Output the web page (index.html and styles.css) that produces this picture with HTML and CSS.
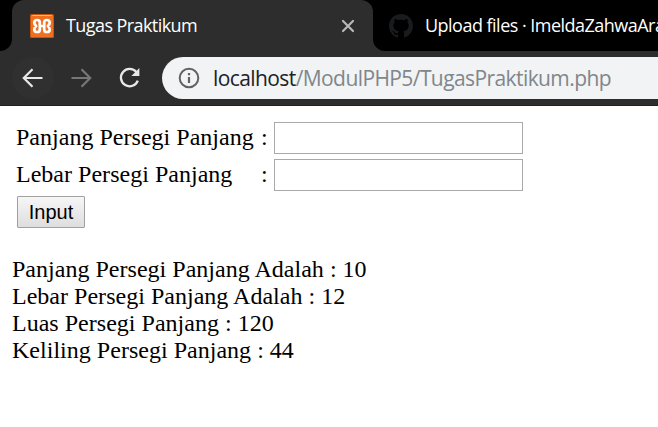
FILE: index.html
```html
<!DOCTYPE html>
<html lang="id">
<head>
<meta charset="utf-8">
<title>Tugas Praktikum</title>
<link rel="stylesheet" href="styles.css">
</head>
<body>
<header class="browser">
  <div class="tabs">
    <div class="strip-left"></div>
    <div class="tab-wrap">
      <div class="tab">
        <svg class="favicon" viewBox="0 0 24 24">
          <rect width="24" height="24" rx="1.5" fill="#c9530f"/>
          <rect x="1" y="1" width="22" height="22" rx="1" fill="#f07020"/>
          <path d="M2.5 1.5h19" stroke="#ffb88a"/>
          <path d="M9.8 12V8.6C9.8 6.8 8.9 6 7.4 6C5.5 6 4.3 7 4.3 8.8C4.3 10.2 5 11 6.1 12C5 13 4.3 14 4.3 15.4C4.3 17 5.5 18 7.4 18C8.9 18 9.8 17.2 9.8 15.4V12H14.2V15.4C14.2 17.2 15.1 18 16.6 18C18.5 18 19.7 17 19.7 15.4C19.7 14 19 13 17.9 12C19 11 19.7 10.2 19.7 8.8C19.7 7 18.5 6 16.6 6C15.1 6 14.2 6.8 14.2 8.6V12" fill="none" stroke="#fff" stroke-width="2.7" stroke-linejoin="round"/>
        </svg>
        <span class="tab-title">Tugas Praktikum</span>
        <svg class="close" viewBox="0 0 14 14"><path d="M2 2L12 12M12 2L2 12" stroke="#b8b8b8" stroke-width="2.2" stroke-linecap="round"/></svg>
      </div>
    </div>
    <div class="strip-right">
      <svg class="github" viewBox="0 0 16 16"><path fill="#191b1d" d="M8 0C3.58 0 0 3.58 0 8c0 3.54 2.29 6.53 5.47 7.59.4.07.55-.17.55-.38 0-.19-.01-.82-.01-1.49-2.01.37-2.53-.49-2.69-.94-.09-.23-.48-.94-.82-1.13-.28-.15-.68-.52-.01-.53.63-.01 1.08.58 1.23.82.72 1.21 1.87.87 2.33.66.07-.52.28-.87.51-1.07-1.78-.2-3.64-.89-3.64-3.95 0-.87.31-1.59.82-2.15-.08-.2-.36-1.02.08-2.12 0 0 .67-.21 2.2.82.64-.18 1.32-.27 2-.27s1.36.09 2 .27c1.53-1.04 2.2-.82 2.2-.82.44 1.1.16 1.92.08 2.12.51.56.82 1.27.82 2.15 0 3.07-1.87 3.75-3.65 3.95.29.25.54.73.54 1.48 0 1.07-.01 1.93-.01 2.2 0 .21.15.46.55.38A8.01 8.01 0 0 0 16 8c0-4.42-3.58-8-8-8z"/></svg>
      <span class="tab-title next-title">Upload files · ImeldaZahwaAra</span>
    </div>
  </div>
  <div class="toolbar">
    <div class="back">
      <svg class="nav-icon" viewBox="0 0 22 22"><path d="M20.5 11H2M10.5 2.2L1.8 11L10.5 19.8" fill="none" stroke="#e8e8e8" stroke-width="2.2"/></svg>
    </div>
    <svg class="nav-icon forward" viewBox="0 0 22 22"><path d="M1.5 11H20M11.5 2.2L20.2 11L11.5 19.8" fill="none" stroke="#777" stroke-width="2.2"/></svg>
    <svg class="nav-icon reload" viewBox="0 0 22 22"><path d="M17.4 5.1A8.7 8.7 0 1 0 18.8 13.6" fill="none" stroke="#e8e8e8" stroke-width="2.3"/><path d="M20.4 1V9H12.4Z" fill="#e8e8e8"/></svg>
    <div class="address">
      <svg class="info" viewBox="0 0 22 22"><circle cx="11" cy="11" r="9.3" fill="none" stroke="#5f6368" stroke-width="2"/><path d="M11 10v6M11 6v2.2" stroke="#5f6368" stroke-width="2.2"/></svg>
      <span class="url"><span class="host">localhost</span><span class="path">/ModulPHP5/TugasPraktikum.php</span></span>
    </div>
  </div>
</header>
<main class="page">
  <form class="form">
    <label for="panjang">Panjang Persegi Panjang</label><span>:</span><input id="panjang" class="field" type="text">
    <label for="lebar">Lebar Persegi Panjang</label><span>:</span><input id="lebar" class="field" type="text">
    <button class="submit" type="button">Input</button>
  </form>
  <div class="results">
    <div>Panjang Persegi Panjang Adalah : 10</div>
    <div>Lebar Persegi Panjang Adalah : 12</div>
    <div>Luas Persegi Panjang : 120</div>
    <div>Keliling Persegi Panjang : 44</div>
  </div>
</main>
</body>
</html>
```
FILE: styles.css
```css
* { box-sizing: border-box; }
body { margin: 0; height: 427px; overflow: hidden; background: #fff; color: #000; font: 24px/27px "Liberation Serif", serif; letter-spacing: 0.02px; }
svg { display: block; flex: none; }
.browser { height: 106px; background: #2d2d2d; border-bottom: 1px solid #211f20; font-family: "Open Sans", "Noto Sans", sans-serif; overflow: hidden; }
.tabs { display: flex; height: 51px; }
.strip-left { width: 12px; background: #000; border-bottom-right-radius: 12px; }
.tab-wrap { width: 361px; background: linear-gradient(#000 0 20px, #2d2d2d 20px); }
.tab { display: flex; align-items: center; height: 51px; padding: 0 18px; background: #2d2d2d; border-radius: 12px 12px 0 0; }
.favicon { width: 24px; height: 24px; margin-right: 12px; }
.tab-title { padding-bottom: 2px; color: #fff; font-size: 18px; line-height: 24px; letter-spacing: -0.58px; white-space: nowrap; }
.next-title { letter-spacing: -0.52px; }
.close { width: 14px; height: 14px; margin-left: auto; }
.strip-right { display: flex; align-items: center; flex: 1; min-width: 0; padding-left: 16px; background: #000; border-bottom-left-radius: 12px; overflow: hidden; }
.github { width: 24px; height: 24px; margin-right: 12px; }
.toolbar { display: flex; align-items: center; height: 54px; padding-left: 12px; }
.back { display: flex; align-items: center; justify-content: center; width: 42px; height: 42px; border-radius: 50%; background: #303030; }
.nav-icon { width: 22px; height: 22px; }
.forward { margin-left: 16px; }
.reload { margin-left: 27px; }
.address { display: flex; align-items: center; flex: 1; height: 42px; margin-left: 21px; padding-left: 16px; background: #f1f3f4; border-radius: 21px 0 0 21px; }
.info { width: 22px; height: 22px; margin-right: 13px; }
.url { font-size: 21px; line-height: 30px; white-space: nowrap; letter-spacing: -0.59px; }
.host { color: #202124; }
.path { color: #80868b; }
.page { padding: 16px 12px 0; }
.form { display: grid; grid-template-columns: 241px 9px 249px; column-gap: 4px; row-gap: 5px; align-items: center; padding-left: 4px; }
.form label, .form span { padding-bottom: 2px; }
.field { width: 249px; height: 32px; padding: 1px 3px; border: 1px solid #a9a9a9; background: #fff; font: 20px "Liberation Sans", sans-serif; }
.submit { width: 68px; height: 32px; margin-left: 1px; padding: 0; border: 1px solid #a0a0a0; border-radius: 1px; background: linear-gradient(#f6f6f6, #dedede); color: #000; font: 20px "Liberation Sans", sans-serif; }
.results { margin-top: 28px; }
```
